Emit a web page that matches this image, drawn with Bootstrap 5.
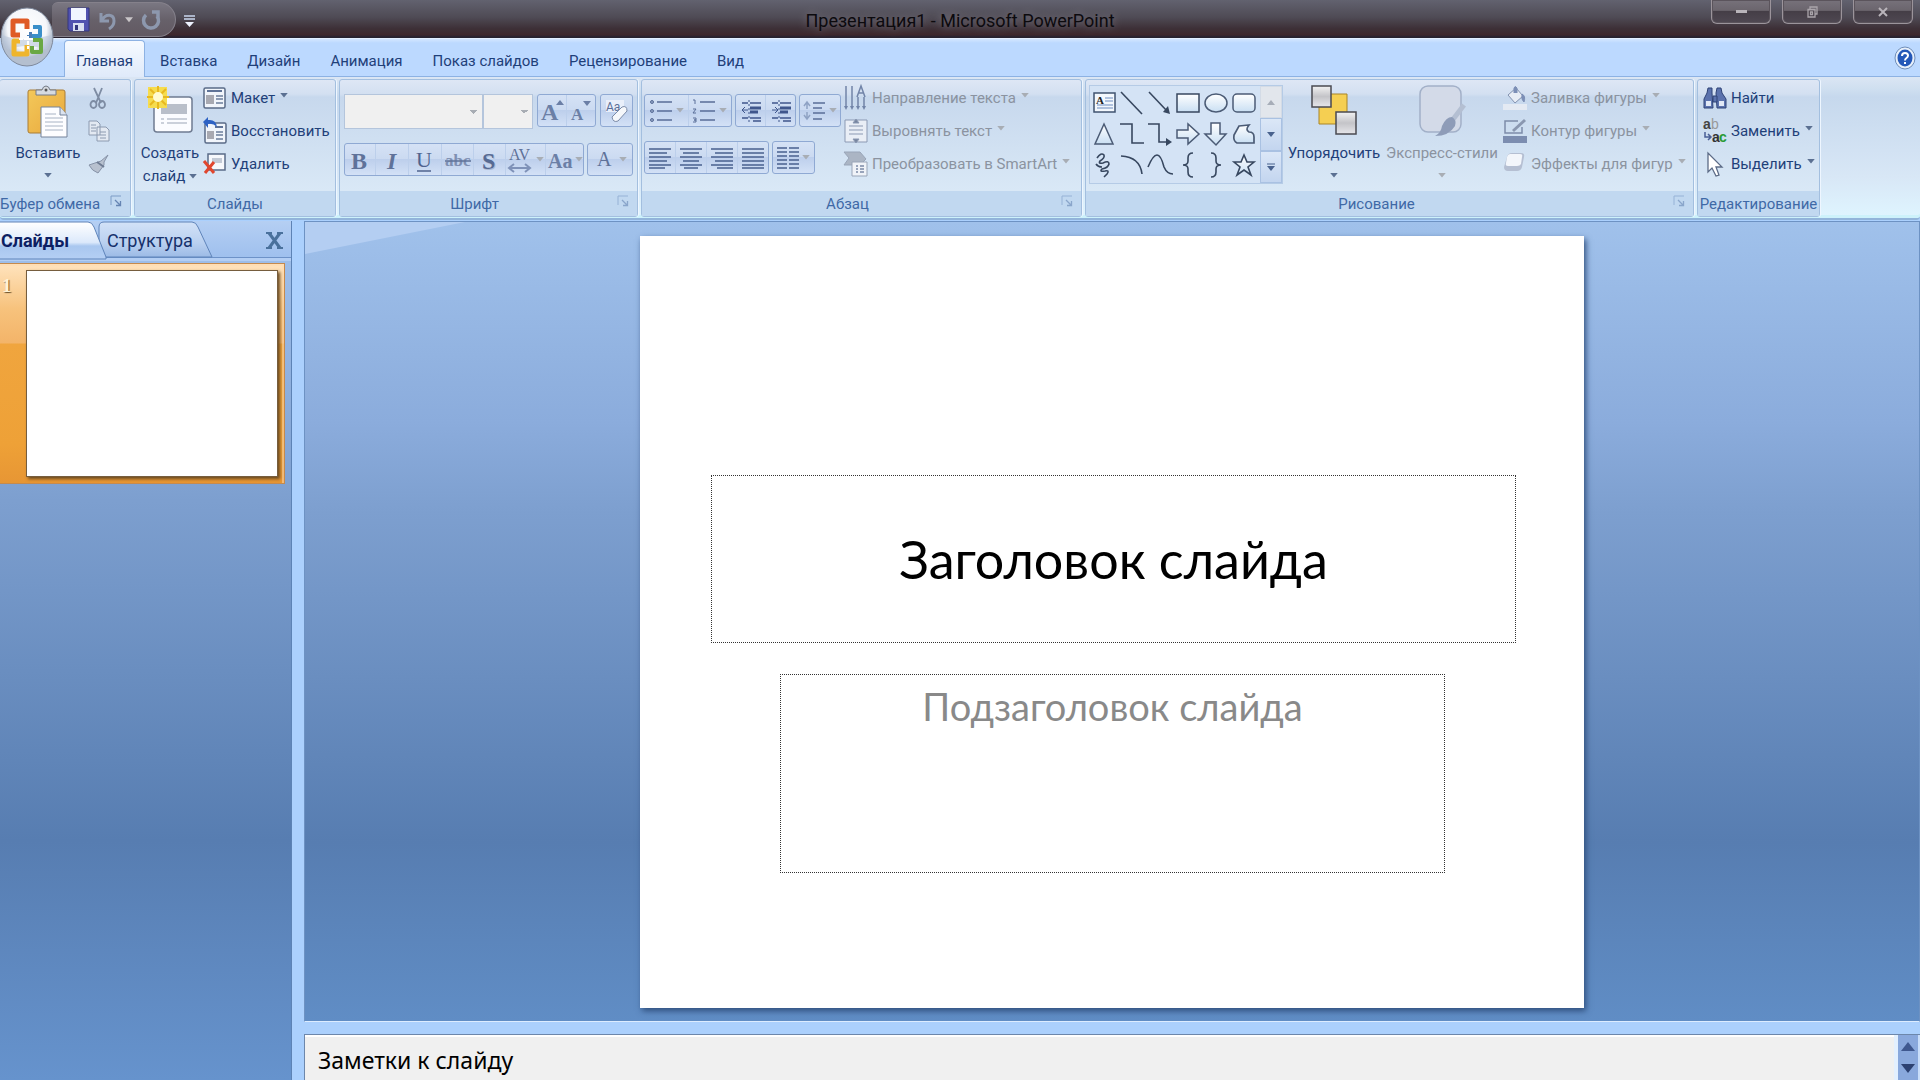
<!DOCTYPE html>
<html lang="ru">
<head>
<meta charset="utf-8">
<meta name="viewport" content="width=device-width, initial-scale=1">
<title>Презентация1 - Microsoft PowerPoint</title>
<link href="https://cdn.jsdelivr.net/npm/bootstrap@5.3.0/dist/css/bootstrap.min.css" rel="stylesheet">
<style>
:root{--ink:#1f4079;--dim:#8b93a0;--line:#8aa9cf;--sky:#bcd9ff}
body{font-family:Roboto,"Noto Sans",sans-serif;font-size:15px;line-height:22px;color:var(--ink);background:#abd0fd;overflow:hidden}
button{font:inherit;color:inherit;background:none;border:0;padding:0}
svg{display:block;flex:none;overflow:visible}
/* title bar */
.titlebar{height:38px;background:linear-gradient(#62626f,#4f4b55 45%,#3d3037 75%,#3e272c 92%,#27222f 97%)}
.apptitle{font-size:18px;line-height:38px;color:#0c0a0e;text-shadow:0 0 8px #86828e}
.qat{height:35px;margin:2px 0 0 52px;width:124px;padding:0 14px 0 15px;border:1px solid #85818b;border-left:0;border-radius:6px 18px 18px 0;background:linear-gradient(#7a7782,#67616a 50%,#625962)}
.winbtn{width:60px;height:24px;border:1px solid #9b949b;border-top:0;border-radius:0 0 6px 6px;background:linear-gradient(#77727b,#6b656d 45%,#453e47 50%,#4f4852);box-shadow:inset 0 0 0 1px #5b545c}
.orb{left:0;top:7px;z-index:5}
/* tabs */
.tabrow{height:39px;background:linear-gradient(#d3e6ff,var(--sky) 4px);border-top:1px solid #e4efff;border-bottom:1px solid #8db2e3}
.tabrow .nav{margin-left:64px;padding-top:1px}
.tabrow .nav-link{color:var(--ink);padding:9px 14px 7px;line-height:22px;border:1px solid transparent;border-bottom:0;border-radius:4px 4px 0 0;margin-bottom:-1px}
.tabrow .nav-link.active{padding-left:11px;padding-right:11px;border-color:#8db2e3;background:linear-gradient(#f6faff,#dfeafa);color:var(--ink)}
/* ribbon */
.ribbon{height:143px;padding-top:2px;gap:3px;background:linear-gradient(#dbe6f4,#cfdff0 12px,#c6d8ed 20px,#d8e7f6 100px,#dff5ff);border-bottom:2px solid #92b4da;border-radius:0 0 4px 4px;box-shadow:inset 0 -3px 0 #cdf2fb}
.grp{height:138px;border:1px solid #a3bfdf;border-radius:3px;background:linear-gradient(#dee7f5,#d3e0f1 14px,#c7d8ed 17px,#d9e8f6 110px);box-shadow:1px 0 0 #eef6ff;flex:none}
.grp .body{height:111px;padding-top:1px}
.cap{height:25px;background:#c1d8f0;color:#3f69a6;line-height:26px;text-align:center;padding-right:36px;white-space:nowrap}
.cap.plain{padding-right:0}
.cap svg{right:8px;top:4px;opacity:.6}
.g-clip .cap{text-align:left;padding:0}
.g-clip .cap svg{opacity:1}
.g-clip{width:131px;border-left:0}.g-slides{width:202px}.g-font{width:299px}.g-par{width:441px}.g-draw{width:609px}.g-edit{width:123px}
.smallcol button{height:33px;gap:4px;white-space:nowrap}
.smallcol button svg.caret{margin-left:1px;margin-top:-5px}
.off{color:var(--dim)}
.caret{width:8px;height:5px;fill:#5b7092}
.off .caret,.set .caret{fill:#a8adb4}
.big{line-height:23px;white-space:nowrap}
.big>svg:first-child{margin:4px 0 3px}
.big>.caret{margin-top:8px}
.set{height:33px;border:1px solid #8fa9d3;border-radius:3px;background:linear-gradient(#d5e2f5,#cbdaf1 48%,#bdcfec 50%,#d3e1f6)}
.set button{height:100%;gap:3px;flex:1 1 auto}
.set button+button{border-left:1px solid #bccfeb}
.combo{height:35px;border:1px solid #b4c5dc;border-radius:0;appearance:none;background-color:#f0f0f0;background-image:linear-gradient(45deg,transparent 50%,#a8adb4 50%),linear-gradient(135deg,#a8adb4 50%,transparent 50%);background-size:4px 4px;background-repeat:no-repeat;background-position:right 8px center,right 4px center;opacity:1}
.gallery{width:194px;height:99px;border:1px solid #b5cbe6;background:#d4e3f5}
.shapes{display:grid;grid-template-columns:repeat(6,28px);grid-template-rows:repeat(3,31px);flex:1;margin-top:1px}
.shapes button{display:grid;place-items:center}
.gscroll{width:22px}
.gscroll button{flex:1;border:1px solid #a9c1e2;background:linear-gradient(#dbe7f7,#c3d5ef)}
.gscroll button:first-child{background:#e2e6ec;border-color:#d3dbe6}
/* work area */
.side{width:292px;border-right:1px solid #5d83b5;background:linear-gradient(#a2c2ec,#8fb0de 160px,#7d9fcf 280px,#577db1 620px,#6693cd)}
.sidetabs{height:37px;background:linear-gradient(#b5cff3,#9fc0ee);border-bottom:1px solid #6d92c8;box-shadow:0 3px 0 #b3cef4}
.sidetabs button{font-size:18px;height:36px;color:#16306b;padding-top:3px}
.tabline{left:0;top:0}
.sidetabs .t-on{width:106px;font-weight:700;color:#0d1f63;text-align:left;padding-left:1px}
.sidetabs .t-off{width:107px;text-align:left;padding-left:1px}
.x{width:34px}
.pick{margin-top:5px;width:285px;padding:6px 6px 6px 0;background:linear-gradient(#ffe3bd,#f7c27c 45px,#f3b469 79px,#f0a53e 80px,#eea137 180px,#e79634);border:1px solid #c58a4d;border-left:0;box-shadow:inset -2px 2px 0 #ffdcae88}
.num{width:26px;color:#fff3d5;font:bold 19px/22px "Liberation Serif",serif;text-shadow:1px 1px 1px #6a4f2a;padding:5px 0 0 2px}
.thumb{flex:1;aspect-ratio:252/207;background:#fff;border:1px solid #765d3e;box-shadow:2px 2px 3px #6a4a20}
.main{margin-left:12px}
.stage{min-height:0;padding:14px 0 13px;background:linear-gradient(#a0c1eb,#8bacdc 200px,#7d9fcf 290px,#577db1 620px,#608dc5);border:1px solid #6d92c3;border-bottom-color:#dcecff}
.glow{left:0;top:0;width:160px;height:32px;background:#b4cef2;clip-path:polygon(0 0,100% 0,0 100%)}
.slide{height:100%;aspect-ratio:944/772;background:#fff;box-shadow:2px 3px 6px #2f4f7d;padding:239px 68px 0 71px}
.ph{border:1px dotted #333;font-family:Lato,"Noto Sans",sans-serif;text-align:center}
.ph1{height:168px;font-size:52px;line-height:167px;color:#000}
.ph2{height:199px;margin:31px 71px 0 69px;font-size:38px;line-height:62px;color:#898989}
.notes{height:46px;margin-top:12px;border:1px solid #6d87ab;border-bottom:0;border-right:0;background:#f0f0f0}
.notes textarea{border:0;background:none;resize:none;font-size:23px;line-height:30px;color:#000;padding:8px 13px 0;outline:0;overflow:hidden;border-top:2px solid #fff;font-family:"Noto Sans",sans-serif}
.notes textarea::placeholder{color:#000;opacity:1}
.nscroll{width:26px;background:#89a8dc;border-left:4px solid #e3f0ff;border-right:2px solid #c9defa}
.nscroll button{height:23px}
</style>
</head>
<body class="vh-100 d-flex flex-column">
<svg width="0" height="0" class="position-absolute" aria-hidden="true">
<defs>
<linearGradient id="gs" x2="0" y2="1"><stop stop-color="#fff"/><stop offset="1" stop-color="#c9dff3"/></linearGradient>
<linearGradient id="gg" x2="0" y2="1"><stop stop-color="#f2f2f2"/><stop offset=".5" stop-color="#c4c4c8"/><stop offset="1" stop-color="#e6e6ea"/></linearGradient>
<linearGradient id="gy" x2="1" y2="1"><stop stop-color="#f3c85a"/><stop offset="1" stop-color="#e9a83c"/></linearGradient>
<linearGradient id="ton" x2="0" y2="1"><stop stop-color="#fff"/><stop offset=".55" stop-color="#dce9fb"/><stop offset=".65" stop-color="#a9c7ef"/><stop offset="1" stop-color="#b4cff4"/></linearGradient>
<linearGradient id="toff" x2="0" y2="1"><stop stop-color="#d3e2f7"/><stop offset=".6" stop-color="#b9d0f0"/><stop offset="1" stop-color="#9cbbe6"/></linearGradient>
<radialGradient id="orb" cy=".35"><stop stop-color="#fff"/><stop offset=".75" stop-color="#f4f6fa"/><stop offset="1" stop-color="#b4bfcf"/></radialGradient>
<symbol id="caret" viewBox="0 0 9 6"><path d="M0 0h9L4.500 5.500z"/></symbol>
<symbol id="launch" viewBox="0 0 12 12"><path d="M1 10V1h10" fill="none" stroke="#7d9cc6"/><path d="M5 5l5 5M10.500 6v4.500H6" fill="none" stroke="#6685b3" stroke-width="1.300"/></symbol>
</defs>
</svg>

<header class="titlebar d-flex position-relative flex-shrink-0">
  <button class="orb position-absolute" aria-label="Office"><svg width="54" height="60" viewBox="0 0 54 60"><ellipse cx="27" cy="30" rx="26" ry="29" fill="url(#orb)" stroke="#7e899c"/><path d="M2 28q12 5 25 4t25-4q-1 10-6 15-19-8-38 0-5-5-6-15" fill="#b9c6da" opacity=".6"/><g fill="none" stroke-width="5" stroke-linejoin="round"><path d="M27 22v-8H13v14h7" stroke="#df5a26"/><path d="M33 20h7v9h-8" stroke="#3b8fc9" stroke-width="4"/><path d="M20 34h-6v13h13v-9" stroke="#efb52c"/><path d="M33 33h8v12H32v-6" stroke="#6aa843" stroke-width="4"/></g><path d="M27 25h5v6h-5z" fill="#4a7fb8"/><path d="M19 32h15M28 24v18" stroke="#fff" stroke-width="2" stroke-dasharray="4 1"/></svg></button>
  <div class="qat d-flex align-items-center justify-content-between">
    <button aria-label="Сохранить"><svg width="23" height="25" viewBox="0 0 23 25"><path d="M1 1h21v23H3l-2-2z" fill="#5152b0" stroke="#34367e"/><path d="M4 1h15v12H4z" fill="#f1f5ff"/><path d="M6 16h11v8H6z" fill="#d9def1"/><path d="M8 18h3v5H8z" fill="#34367e"/></svg></button>
    <button aria-label="Отменить"><svg width="18" height="20" viewBox="0 0 18 20"><path d="M2 3v8h8M3 10C7 3 15 4 15 11q0 5-5 8" fill="none" stroke="#8d98ae" stroke-width="3"/></svg></button>
    <button aria-label="Список отмены"><svg width="8" height="6" fill="#c9c5c8"><use href="#caret"/></svg></button>
    <button aria-label="Повторить"><svg width="19" height="20" viewBox="0 0 19 20"><path d="M4 5a7.500 7.500 0 1 0 11 1M10 2h6v7" fill="none" stroke="#8d98ae" stroke-width="3.500"/></svg></button>
  </div>
  <button class="ms-2" aria-label="Настройка панели"><svg width="11" height="13" viewBox="0 0 11 13" class="mt-1"><path d="M0 1h11M0 4h11" stroke="#c9d6ee" stroke-width="1.500"/><path d="M1 7h9l-4.500 5z" fill="#eef3ff"/></svg></button>
  <div class="apptitle position-absolute start-50 top-50 translate-middle text-nowrap pt-1">Презентация1 - Microsoft PowerPoint</div>
  <div class="d-flex ms-auto" style="gap:11px;margin-right:7px">
    <button class="winbtn d-flex justify-content-center align-items-center" aria-label="Свернуть"><svg width="11" height="4"><path d="M0 0h11v3H0z" fill="#b9b4ba"/></svg></button>
    <button class="winbtn d-flex justify-content-center align-items-center" aria-label="Восстановить окно"><svg width="11" height="12" fill="none" stroke="#aaa5ab"><path d="M3 3V1h7v7H8M1 3.500h7V11H1zM3.500 6h2v2.500h-2z" stroke-width="1.300"/></svg></button>
    <button class="winbtn d-flex justify-content-center align-items-center" aria-label="Закрыть"><svg width="10" height="10"><path d="M1 1l8 8M9 1L1 9" stroke="#b9b4ba" stroke-width="2"/></svg></button>
  </div>
</header>

<div class="tabrow d-flex flex-shrink-0">
  <nav class="nav flex-nowrap">
    <a class="nav-link active" href="#">Главная</a><a class="nav-link" href="#">Вставка</a><a class="nav-link" href="#">Дизайн</a><a class="nav-link" href="#">Анимация</a><a class="nav-link" href="#">Показ слайдов</a><a class="nav-link" href="#">Рецензирование</a><a class="nav-link" href="#">Вид</a>
  </nav>
  <button class="ms-auto me-1" aria-label="Справка"><svg width="22" height="24" viewBox="0 0 22 24"><ellipse cx="11" cy="12" rx="10" ry="11" fill="#e7f0fb" stroke="#6f8db8"/><ellipse cx="11" cy="12" rx="7.500" ry="8.500" fill="#2458b8"/><path d="M8 10q0-3 3-3t3 2.500q0 1.500-1.500 2.500T11 14.500M11 16v2" fill="none" stroke="#fff" stroke-width="2"/></svg></button>
</div>

<div class="ribbon d-flex flex-shrink-0">
  <section class="grp g-clip">
    <div class="body d-flex">
      <button class="big d-flex flex-column align-items-center" style="width:80px;margin-left:8px"><svg width="42" height="54" viewBox="0 0 42 54"><rect x="1" y="5" width="37" height="43" rx="2" fill="url(#gy)" stroke="#a97c36"/><path d="M9 10V5h6q1-4 4-4t4 4h6v5z" fill="#d6dae0" stroke="#747b87"/><circle cx="19" cy="5" r="1.500" fill="#555"/><path d="M14 22h19l7 8v22H14z" fill="#fdfdff" stroke="#75839b"/><path d="M33 22v8h7" fill="#dbe3ef" stroke="#75839b"/><path d="M18 29h11M18 33h18M18 37h18M18 41h18M18 45h18" stroke="#a8b3c4"/></svg><span>Вставить</span><svg class="caret"><use href="#caret"/></svg></button>
      <div class="smallcol off d-flex flex-column">
        <button aria-label="Вырезать"><svg width="20" height="24" viewBox="0 0 20 24" fill="none" stroke="#7e8ca3" stroke-width="1.800"><path d="M6 2l7 15M14 2L8 17"/><ellipse cx="5.500" cy="18.500" rx="3" ry="3.500"/><ellipse cx="14" cy="18.500" rx="3" ry="3.500"/></svg></button>
        <button aria-label="Копировать"><svg width="22" height="22" viewBox="0 0 22 22" fill="#e3e9f2" stroke="#8c9ab0"><path d="M1 1h8l3 3v11H1zM9 7h9l3 3v11H9z"/><path d="M3 5h5M3 8h5M3 11h5M12 12h6M12 15h6M12 18h6"/></svg></button>
        <button aria-label="Формат по образцу"><svg width="22" height="20" viewBox="0 0 22 20"><path d="M20 1l-7 6-3 1-9 3q3 6 9 8l6-8V8z" fill="#b8c1cf" stroke="#8793a8"/><path d="M9 8l7 5" stroke="#6f7c93" stroke-width="2"/></svg></button>
      </div>
    </div>
    <div class="cap position-relative">Буфер обмена<svg width="12" height="12" class="position-absolute"><use href="#launch"/></svg></div>
  </section>

  <section class="grp g-slides">
    <div class="body d-flex">
      <button class="big d-flex flex-column align-items-center" style="width:66px;margin-left:2px"><svg width="46" height="54" viewBox="0 0 46 54"><rect x="7" y="12" width="38" height="35" rx="3" fill="#fbfcff" stroke="#6f7b91" stroke-width="1.500"/><path d="M14 19h26v10H14z" fill="#b9bfca"/><path d="M14 34h3M20 34h20M14 38h3M20 38h20" stroke="#9ba5b6"/><path d="M1 2h19v21H1z" fill="#f6dc4e"/><path d="M11 1v23M0 12h22M3 4l16 16M19 4L3 20" stroke="#e8b820" stroke-width="2"/><circle cx="11" cy="12" r="5" fill="#fffbd0"/></svg><span>Создать</span><span class="d-flex align-items-center gap-1">слайд<svg class="caret"><use href="#caret"/></svg></span></button>
      <div class="smallcol d-flex flex-column">
        <button class="d-flex align-items-center"><svg width="24" height="22" viewBox="0 0 24 22"><rect x="1" y="1" width="21" height="20" rx="1.500" fill="#f1f5fb" stroke="#5a6b88" stroke-width="1.500"/><path d="M4 4h15" stroke="#5f7397" stroke-width="2"/><path d="M3 8h8v9H3z" fill="#a8a9b1"/><path d="M13 9h7M13 12h7M13 16h7" stroke="#6b7d9c" stroke-width="1.500"/></svg><span>Макет</span><svg class="caret"><use href="#caret"/></svg></button>
        <button class="d-flex align-items-center"><svg width="24" height="27" viewBox="0 0 24 27"><rect x="2" y="6" width="21" height="20" rx="1.500" fill="#f1f5fb" stroke="#5a6b88" stroke-width="1.500"/><path d="M12 10h8" stroke="#5f7397" stroke-width="2"/><path d="M4 14h7v8H4z" fill="#a8a9b1"/><path d="M13 15h7M13 18h7M13 22h7" stroke="#6b7d9c" stroke-width="1.500"/><path d="M0 5l5-5v3q8-1 9 7-4-4-9-3v4z" fill="#2d62c4"/></svg><span>Восстановить</span></button>
        <button class="d-flex align-items-center"><svg width="24" height="22" viewBox="0 0 24 22"><path d="M5 1h17v16H5z" fill="#f6f8fc" stroke="#5a6b88" stroke-width="1.500"/><path d="M9 5h10v5H9z" fill="#c3cad6"/><path d="M1 8l10 12M11 9L2 20" stroke="#e0472f" stroke-width="3"/></svg><span>Удалить</span></button>
      </div>
    </div>
    <div class="cap plain">Слайды</div>
  </section>

  <section class="grp g-font">
    <div class="body d-flex flex-column px-1" style="padding-top:14px">
      <div class="d-flex">
        <select class="combo" style="width:140px" aria-label="Шрифт" disabled><option></option></select>
        <select class="combo" style="width:51px" aria-label="Размер шрифта" disabled><option></option></select>
        <div class="set d-flex" style="width:60px;margin-left:4px"><button aria-label="Увеличить размер"><svg width="28" height="26" viewBox="0 0 28 26"><text x="3" y="22" font-family="Liberation Serif" font-size="24" font-weight="bold" fill="#6b7fa6">A</text><path d="M18 7l4-5 4 5z" fill="#6b7fa6"/></svg></button><button aria-label="Уменьшить размер"><svg width="28" height="26" viewBox="0 0 28 26"><text x="4" y="22" font-family="Liberation Serif" font-size="17" font-weight="bold" fill="#6b7fa6">A</text><path d="M16 3h8l-4 5z" fill="#6b7fa6"/></svg></button></div>
        <div class="set d-flex" style="width:33px;margin-left:4px"><button class="d-flex justify-content-center align-items-center" aria-label="Очистить формат"><svg width="26" height="26" viewBox="0 0 26 26"><path d="M2 2h18v12H2z" fill="#e9effa"/><text x="2" y="13" font-family="Roboto" font-size="12" fill="#5b6f97">Aa</text><path d="M8 19l10-10q5-2 5 4L14 23q-5 2-6-4z" fill="#f6f8fb" stroke="#7c8ba8"/></svg></button></div>
      </div>
      <div class="d-flex" style="margin-top:14px">
        <div class="set d-flex" style="width:242px">
          <button aria-label="Полужирный"><svg width="29" height="28"><text x="6" y="23" font-family="Liberation Serif" font-size="24" font-weight="bold" fill="#5f7299">B</text></svg></button>
          <button aria-label="Курсив"><svg width="32" height="28"><text x="11" y="23" font-family="Liberation Serif" font-size="24" font-style="italic" font-weight="bold" fill="#5f7299">I</text></svg></button>
          <button aria-label="Подчеркнутый"><svg width="31" height="28"><text x="7" y="21" font-family="Liberation Serif" font-size="22" fill="#4f638e">U</text><path d="M8 25h14" stroke="#4f638e" stroke-width="1.500"/></svg></button>
          <button aria-label="Зачеркнутый"><svg width="31" height="28"><text x="3" y="20" font-family="Liberation Serif" font-size="17" font-weight="bold" fill="#7f90b2">abc</text><path d="M3 15h26" stroke="#5f7299" stroke-width="1.500"/></svg></button>
          <button aria-label="Тень"><svg width="30" height="28"><text x="9" y="24" font-family="Liberation Serif" font-size="24" font-weight="bold" fill="#a9b8d3" aria-hidden="true">S</text><text x="8" y="23" font-family="Liberation Serif" font-size="24" font-weight="bold" fill="#566a93">S</text></svg></button>
          <button class="d-flex align-items-center" aria-label="Интервал"><svg width="27" height="28"><text x="3" y="14" font-family="Liberation Serif" font-size="16" fill="#5f7299">AV</text><path d="M3 22h20M8 18l-5 4 5 4M19 18l5 4-5 4" fill="none" stroke="#7f92b8" stroke-width="2"/></svg><svg class="caret"><use href="#caret"/></svg></button>
          <button class="d-flex align-items-center" aria-label="Регистр"><svg width="26" height="28"><text x="2" y="22" font-family="Liberation Serif" font-size="20" font-weight="bold" fill="#6b7fa6">Aa</text></svg><svg class="caret"><use href="#caret"/></svg></button>
        </div>
        <div class="set d-flex" style="width:46px;margin-left:3px"><button class="d-flex align-items-center justify-content-center" aria-label="Цвет текста"><svg width="22" height="28"><text x="3" y="20" font-family="Liberation Serif" font-size="20" fill="#5f7299">A</text></svg><svg class="caret"><use href="#caret"/></svg></button></div>
      </div>
    </div>
    <div class="cap position-relative" style="padding-right:28px">Шрифт<svg width="12" height="12" class="position-absolute"><use href="#launch"/></svg></div>
  </section>

  <section class="grp g-par">
    <div class="body d-flex">
      <div class="d-flex flex-column" style="width:200px;padding:13px 0 0 2px">
        <div class="d-flex">
          <div class="set d-flex" style="width:88px"><button class="d-flex align-items-center justify-content-center" aria-label="Маркеры"><svg width="24" height="24" viewBox="0 0 24 24" stroke="#5a6e98" fill="#8fa2c4"><path d="M8 3h15M8 12h15M8 21h15" stroke-width="1.500"/><circle cx="3" cy="3" r="1.500"/><circle cx="3" cy="12" r="1.500"/><circle cx="3" cy="21" r="1.500"/></svg><svg class="caret"><use href="#caret"/></svg></button><button class="d-flex align-items-center justify-content-center" aria-label="Нумерация"><svg width="24" height="24" viewBox="0 0 24 24" stroke="#5a6e98" fill="none"><path d="M8 3h15M8 12h15M8 21h15" stroke-width="1.500"/><path d="M1 1h2v4M1 10h3l-3 4h3M1 19h3v2H2h2v2H1"/></svg><svg class="caret"><use href="#caret"/></svg></button></div>
          <div class="set d-flex" style="width:61px;margin-left:3px"><button class="d-flex align-items-center justify-content-center" aria-label="Уменьшить отступ"><svg width="20" height="22" viewBox="0 0 20 22" stroke="#3f568c"><path d="M1 3h6M9 3h11M1 18h6M9 18h11M12 21h8" stroke-width="1.500"/><path d="M9 8h11M9 12h8" stroke-width="3"/><path d="M8 0v22" stroke-dasharray="2 2"/><path d="M1 10h6M4 7l-3 3 3 3" fill="none"/></svg></button><button class="d-flex align-items-center justify-content-center" aria-label="Увеличить отступ"><svg width="20" height="22" viewBox="0 0 20 22" stroke="#3f568c"><path d="M1 3h6M9 3h11M1 18h6M9 18h11M12 21h8" stroke-width="1.500"/><path d="M9 8h11M9 12h8" stroke-width="3"/><path d="M8 0v22" stroke-dasharray="2 2"/><path d="M1 10h6M4 7l3 3-3 3" fill="none"/></svg></button></div>
          <div class="set d-flex" style="width:42px;margin-left:3px"><button class="d-flex align-items-center justify-content-center" aria-label="Интервал строк"><svg width="22" height="22" viewBox="0 0 22 22" stroke="#5a6e98" stroke-width="1.500"><path d="M9 3h12M9 8h9M9 13h12M9 19h9"/><path d="M3 2v7M0 6l3-4 3 4M3 12v7M0 15l3 4 3-4" stroke="#8fa2c4" fill="none"/></svg><svg class="caret"><use href="#caret"/></svg></button></div>
        </div>
        <div class="d-flex" style="margin-top:14px">
          <div class="set d-flex" style="width:125px">
            <button class="d-flex align-items-center justify-content-center" aria-label="По левому краю"><svg width="22" height="20" stroke="#48608f" stroke-width="1.500"><path d="M0 1h22M0 5h18M0 9h22M0 13h18M0 17h22M0 20h16"/></svg></button>
            <button class="d-flex align-items-center justify-content-center" aria-label="По центру"><svg width="22" height="20" stroke="#48608f" stroke-width="1.500"><path d="M0 1h22M3 5h16M0 9h22M3 13h16M0 17h22M4 20h14"/></svg></button>
            <button class="d-flex align-items-center justify-content-center" aria-label="По правому краю"><svg width="22" height="20" stroke="#48608f" stroke-width="1.500"><path d="M0 1h22M4 5h18M0 9h22M4 13h18M0 17h22M6 20h16"/></svg></button>
            <button class="d-flex align-items-center justify-content-center" aria-label="По ширине"><svg width="22" height="20" stroke="#48608f" stroke-width="1.500"><path d="M0 1h22M0 5h22M0 9h22M0 13h22M0 17h22M0 20h22"/></svg></button>
          </div>
          <div class="set d-flex" style="width:43px;margin-left:3px"><button class="d-flex align-items-center justify-content-center" aria-label="Колонки"><svg width="22" height="22" stroke="#48608f" stroke-width="1.500"><path d="M0 1h10M12 1h10M0 5h10M12 5h10M0 9h10M12 9h10M0 13h10M12 13h10M0 17h10M12 17h10M0 21h10M12 21h10"/></svg><svg class="caret"><use href="#caret"/></svg></button></div>
        </div>
      </div>
      <div class="smallcol off d-flex flex-column" style="margin-left:2px">
        <button class="d-flex align-items-center"><svg width="24" height="26" viewBox="0 0 24 26" stroke="#7184a8" fill="none" stroke-width="1.500"><path d="M2 1v22M8 1v22M14 12v11M20 12v11M13 12l4-11 4 11M14 8h6"/><path d="M0 21l2 4 2-4M6 21l2 4 2-4M12 21l2 4 2-4M18 21l2 4 2-4" fill="#7184a8" stroke="none"/></svg><span>Направление текста</span><svg class="caret"><use href="#caret"/></svg></button>
        <button class="d-flex align-items-center"><svg width="24" height="26" viewBox="0 0 24 26" stroke="#8b99b3"><path d="M1 2h22v22H1z" fill="#e9eef6"/><path d="M5 8h14M5 12h14M5 16h14"/><path d="M9 5l3-4 3 4zM9 21l3 4 3-4z" fill="#76849f"/></svg><span>Выровнять текст</span><svg class="caret"><use href="#caret"/></svg></button>
        <button class="d-flex align-items-center"><svg width="24" height="26" viewBox="0 0 24 26" stroke="#99a5b8"><path d="M0 1h16l6 7-6 6H0l5-7z" fill="#abb5c4"/><path d="M8 11h15v14H8z" fill="#f0f3f8"/><path d="M12 15h2M16 15h4M12 18h2M16 18h4M12 21h2M16 21h4" stroke="#7b8ba6" stroke-width="1.500"/></svg><span>Преобразовать в SmartArt</span><svg class="caret"><use href="#caret"/></svg></button>
      </div>
    </div>
    <div class="cap position-relative" style="padding-right:28px">Абзац<svg width="12" height="12" class="position-absolute"><use href="#launch"/></svg></div>
  </section>

  <section class="grp g-draw">
    <div class="body d-flex">
      <div class="gallery d-flex mt-1" style="margin-left:3px">
        <div class="shapes">
          <button aria-label="Надпись"><svg width="23" height="22" viewBox="0 0 23 22"><rect x="1" y="1" width="21" height="19" fill="#f3f8fd" stroke="#3f536f" stroke-width="1.500"/><text x="3" y="12" font-family="Liberation Serif" font-size="11" font-weight="bold" fill="#222">A</text><path d="M12 6h8M12 9h8M4 13h16M4 16h16" stroke="#6d8cc0"/></svg></button>
          <button aria-label="Линия"><svg width="24" height="24"><path d="M1 1l21 22" stroke="#37475f" stroke-width="1.600"/></svg></button>
          <button aria-label="Стрелка"><svg width="24" height="24"><path d="M1 1l18 19" stroke="#37475f" stroke-width="1.600"/><path d="M22 23l-7-2 5-6z" fill="#37475f"/></svg></button>
          <button aria-label="Прямоугольник"><svg width="24" height="22"><rect x="1" y="2" width="22" height="18" fill="url(#gs)" stroke="#37475f" stroke-width="1.500"/></svg></button>
          <button aria-label="Овал"><svg width="24" height="22"><ellipse cx="12" cy="11" rx="11" ry="9" fill="url(#gs)" stroke="#4b5b75" stroke-width="1.500"/></svg></button>
          <button aria-label="Скругленный прямоугольник"><svg width="24" height="22"><rect x="1" y="2" width="22" height="18" rx="4" fill="url(#gs)" stroke="#4b5b75" stroke-width="1.500"/></svg></button>
          <button aria-label="Треугольник"><svg width="22" height="24"><path d="M11 2l9 20H2z" fill="url(#gs)" stroke="#4b5b75" stroke-width="1.500"/></svg></button>
          <button aria-label="Соединитель"><svg width="24" height="22"><path d="M0 1h12v19h12" fill="none" stroke="#37475f" stroke-width="1.600"/></svg></button>
          <button aria-label="Соединитель со стрелкой"><svg width="24" height="24"><path d="M0 2h11v18h8" fill="none" stroke="#37475f" stroke-width="1.600"/><path d="M24 20l-6-4v8z" fill="#37475f"/></svg></button>
          <button aria-label="Стрелка вправо"><svg width="24" height="24"><path d="M1 8h11V2l11 10-11 10v-6H1z" fill="url(#gs)" stroke="#4b5b75" stroke-width="1.500"/></svg></button>
          <button aria-label="Стрелка вниз"><svg width="24" height="24"><path d="M7 1h9v11h6L12 23 1 12h6z" fill="url(#gs)" stroke="#4b5b75" stroke-width="1.500"/></svg></button>
          <button aria-label="Полилиния"><svg width="24" height="22"><path d="M7 3l10-1q-4 5 0 7 5 0 5 5v6H5q-4-2-3-8z" fill="url(#gs)" stroke="#4b5b75" stroke-width="1.700"/></svg></button>
          <button aria-label="Рисованная кривая"><svg width="22" height="26"><path d="M4 6q4-6 7-3 1 3-4 6-2 3 3 2 6-3 6 1-1 4-7 5-3 3 3 2 5-1 2 3l-3 3M3 12q2 3 6 3" fill="none" stroke="#37475f" stroke-width="1.600"/></svg></button>
          <button aria-label="Дуга"><svg width="24" height="22"><path d="M1 2q19 1 21 18" fill="none" stroke="#37475f" stroke-width="1.600"/></svg></button>
          <button aria-label="Кривая"><svg width="25" height="24"><path d="M0 14Q5 2 9 2t7 12q3 7 9 7" fill="none" stroke="#37475f" stroke-width="1.600"/></svg></button>
          <button aria-label="Левая скобка"><svg width="14" height="26"><path d="M12 1Q7 1 7 6v3q0 4-5 4 5 0 5 4v3q0 5 5 5" fill="none" stroke="#37475f" stroke-width="1.600"/></svg></button>
          <button aria-label="Правая скобка"><svg width="14" height="26"><path d="M2 1q5 0 5 5v3q0 4 5 4-5 0-5 4v3q0 5-5 5" fill="none" stroke="#37475f" stroke-width="1.600"/></svg></button>
          <button aria-label="Звезда"><svg width="24" height="24"><path d="M12 2l3 7h7l-6 5 3 8-7-5-7 5 3-8-6-5h7z" fill="url(#gs)" stroke="#37475f" stroke-width="1.600"/></svg></button>
        </div>
        <div class="gscroll d-flex flex-column">
          <button class="d-flex align-items-center justify-content-center" aria-label="Вверх"><svg width="8" height="5"><path d="M0 5h8L4 0z" fill="#a7adb8"/></svg></button>
          <button class="d-flex align-items-center justify-content-center" aria-label="Вниз"><svg width="8" height="5"><path d="M0 0h8L4 5z" fill="#49628e"/></svg></button>
          <button class="d-flex align-items-center justify-content-center" aria-label="Все фигуры"><svg width="8" height="8"><path d="M0 1h8" stroke="#49628e"/><path d="M0 3h8L4 8z" fill="#49628e"/></svg></button>
        </div>
      </div>
      <button class="big d-flex flex-column align-items-center" style="width:102px"><svg width="46" height="54" viewBox="0 0 46 54"><path d="M8 9h28v30H8z" fill="#f5cf52" stroke="#a98527"/><rect x="1" y="1" width="19" height="21" fill="url(#gg)" stroke="#4a4a50" stroke-width="1.500"/><rect x="25" y="27" width="20" height="22" fill="url(#gg)" stroke="#4a4a50" stroke-width="1.500"/></svg><span>Упорядочить</span><svg class="caret"><use href="#caret"/></svg></button>
      <button class="big off d-flex flex-column align-items-center" style="width:114px"><svg width="46" height="54" viewBox="0 0 46 54"><rect x="1" y="1" width="41" height="46" rx="8" fill="#d3dae8" stroke="#a2b0c8" stroke-width="1.500"/><path d="M45 20L32 37" stroke="#b4bfd2" stroke-width="5"/><path d="M33 32q5 3 3 9-6 10-20 10 6-3 7-10 4-9 10-9z" fill="#8e9cb8"/></svg><span>Экспресс-стили</span><svg class="caret"><use href="#caret"/></svg></button>
      <div class="smallcol off d-flex flex-column" style="margin-left:4px">
        <button class="d-flex align-items-center"><svg width="24" height="26" viewBox="0 0 24 26"><path d="M5 10l8-7 7 8-8 7z" fill="#e8edf5" stroke="#8292b0"/><path d="M11 8V3q1-3 3 0v5M19 9q4 2 2 8-3-2-2-8" fill="#7c8fb6" stroke="#7c8fb6"/><path d="M0 19h24v6H0z" fill="#e4eaf3"/></svg><span>Заливка фигуры</span><svg class="caret"><use href="#caret"/></svg></button>
        <button class="d-flex align-items-center"><svg width="24" height="26" viewBox="0 0 24 26"><path d="M15 3H2v12h17V9" fill="none" stroke="#7d8ca9" stroke-width="1.500"/><path d="M22 2L10 13" stroke="#8a97b0" stroke-width="3"/><path d="M0 18h24v7H0z" fill="#7c8db0"/></svg><span>Контур фигуры</span><svg class="caret"><use href="#caret"/></svg></button>
        <button class="d-flex align-items-center"><svg width="24" height="26" viewBox="0 0 24 26"><path d="M4 6q1-4 5-4h9q4 0 3 4l-2 10q-1 4-5 4H5q-4 0-4-4z" fill="#b5bfd2"/><path d="M7 3h10q3 0 2 3l-1 7q-1 2-4 2H5q-3 0-2-3l1-6q1-3 3-3z" fill="#f3f6fb"/></svg><span>Эффекты для фигур</span><svg class="caret"><use href="#caret"/></svg></button>
      </div>
    </div>
    <div class="cap position-relative" style="padding-right:26px">Рисование<svg width="12" height="12" class="position-absolute"><use href="#launch"/></svg></div>
  </section>

  <section class="grp g-edit">
    <div class="body d-flex">
      <div class="smallcol d-flex flex-column" style="margin-left:5px">
        <button class="d-flex align-items-center"><svg width="24" height="24" viewBox="0 0 24 24" fill="#5b72ad" stroke="#2f4376"><path d="M5 2h4v5l1 15H1V13L4 7zM14 2h4l1 5 4 6v9h-9L13 7z"/><path d="M10 10h4v6h-4z"/><path d="M3 15h5v5H3zM16 15h5v5h-5z" fill="#e2e9f6" stroke="none"/></svg><span>Найти</span></button>
        <button class="d-flex align-items-center"><svg width="24" height="26" viewBox="0 0 24 26" font-family="Liberation Sans" font-weight="bold" font-size="14"><text x="0" y="11" fill="#444">a</text><text x="8" y="11" fill="#999" font-weight="normal">b</text><text x="9" y="24" fill="#333">a</text><text x="16" y="24" fill="#2a9b35">c</text><path d="M2 14v5h5M5 16l3 3-3 3" fill="none" stroke="#4a5f95" stroke-width="1.500"/></svg><span>Заменить</span><svg class="caret"><use href="#caret"/></svg></button>
        <button class="d-flex align-items-center"><svg width="24" height="26" viewBox="0 0 24 26"><path d="M5 2v19l4-4 4 8 3-1-3-8h6z" fill="#fff" stroke="#5c6b86" stroke-width="1.300"/></svg><span>Выделить</span><svg class="caret"><use href="#caret"/></svg></button>
      </div>
    </div>
    <div class="cap plain">Редактирование</div>
  </section>
</div>

<div class="d-flex flex-fill" style="min-height:0;padding-top:1px">
  <aside class="side flex-shrink-0">
    <div class="sidetabs d-flex position-relative">
      <svg class="tabline position-absolute" width="214" height="37" aria-hidden="true"><path d="M99 36V6q0-5 5-5h88q4 0 6 5l14 30z" fill="url(#toff)" stroke="#5f84ba"/><path d="M-1 38V1h89q4 0 6 5l12 30v2z" fill="url(#ton)" stroke="#5f84ba"/></svg>
      <button class="t-on position-relative">Слайды</button><button class="t-off position-relative">Структура</button>
      <button class="x ms-auto d-flex align-items-center justify-content-center" aria-label="Закрыть панель"><svg width="17" height="17"><path d="M3 1l11 15M14 1L3 16" stroke="#4a719c" stroke-width="3"/><path d="M0 1h6M11 1h6M0 16h6M11 16h6" stroke="#4a719c" stroke-width="2"/></svg></button>
    </div>
    <div class="pick d-flex"><div class="num">1</div><div class="thumb"></div></div>
  </aside>
  <main class="main d-flex flex-column flex-fill">
    <div class="stage flex-fill position-relative d-flex justify-content-center">
      <div class="glow position-absolute"></div>
      <article class="slide position-relative">
        <div class="ph ph1">Заголовок слайда</div>
        <div class="ph ph2">Подзаголовок слайда</div>
      </article>
    </div>
    <div class="notes d-flex flex-shrink-0">
      <textarea class="flex-fill" aria-label="Заметки" placeholder="Заметки к слайду"></textarea>
      <div class="nscroll d-flex flex-column">
        <button class="d-flex align-items-center justify-content-center" aria-label="Прокрутить вверх"><svg width="14" height="9"><path d="M0 9h14L7 0z" fill="#3f588f"/></svg></button>
        <button class="d-flex align-items-center justify-content-center" aria-label="Прокрутить вниз"><svg width="14" height="9"><path d="M0 0h14L7 9z" fill="#2c4171"/></svg></button>
      </div>
    </div>
  </main>
</div>
<script src="https://cdn.jsdelivr.net/npm/bootstrap@5.3.0/dist/js/bootstrap.bundle.min.js"></script>
</body>
</html>
